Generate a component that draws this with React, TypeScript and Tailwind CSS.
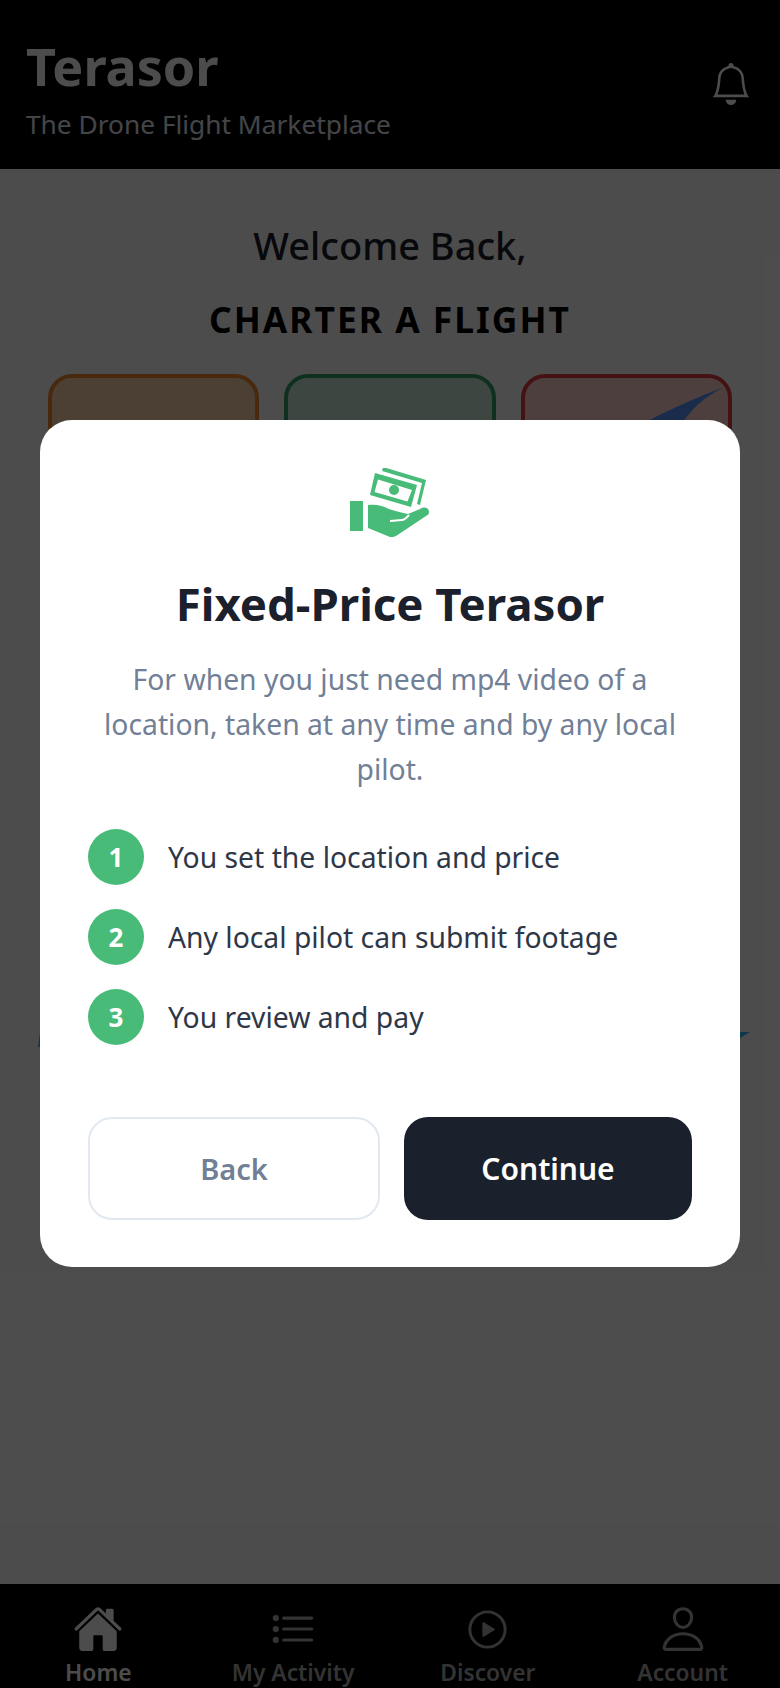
import { BsBell } from "react-icons/bs";
import {
  IoHome,
  IoListOutline,
  IoPersonOutline,
  IoPlayCircleOutline,
} from "react-icons/io5";

const steps = [
  "You set the location and price",
  "Any local pilot can submit footage",
  "You review and pay",
];

const MoneyHand = () => (
  <svg viewBox="30 18 80 70" className="w-[80px] h-[70px]" fill="#48bb78">
    <path d="M30 51h13v30H30z" />
    <path d="M48 55C57 54 63 56 69 59C74 61 80 62 88 64L100 59C105 56 109 58 109 62C109 64 108 65 106 66L76 86C74 87 72 87 70 87L48 78Z" />
    <path d="M70 71L82 70C85 70 87 67 89 65" fill="none" stroke="#fff" strokeWidth="2" />
    <path
      fillRule="evenodd"
      d="M55 23L97 35L91 57L50 45ZM58 29.5L92 40L87.5 51.5L54.5 42Z"
    />
    <path d="M63 17L106 30L100 55L97 54L102 33L62 21Z" />
    <circle cx="74" cy="40" r="5" />
  </svg>
);

const NavItem = ({
  icon,
  label,
  active,
}: {
  icon: React.ReactNode;
  label: string;
  active?: boolean;
}) => (
  <div className={`flex flex-col items-center flex-1 ${active ? "text-white" : "text-[#aaaaaa]"}`}>
    <div className="h-[50px] flex items-center">{icon}</div>
    <span className="mt-[4px] text-[22.8px] leading-[30px] font-semibold whitespace-nowrap">{label}</span>
  </div>
);

export default function App() {
  return (
    <div className="relative h-[1688px] w-[780px] overflow-hidden bg-white flex flex-col font-['Noto_Sans',sans-serif]">
      {/* Header */}
      <header className="h-[169px] shrink-0 bg-black pl-[26px] pr-[28px] pt-[8px] flex items-center justify-between">
        <div>
          <h1 className="text-[52px] leading-[60px] font-bold text-white">Terasor</h1>
          <p className="mt-[10px] text-[26.3px] leading-[36px] text-[#e2e8f0]">The Drone Flight Marketplace</p>
        </div>
        <BsBell className="w-[42px] h-[42px] text-white -mt-[10px]" />
      </header>

      {/* Home page behind the modal */}
      <main className="flex-1 px-[48px] pt-[51px]">
        <h2 className="text-center text-[38px] leading-[50px] font-medium text-[#1a202c]">Welcome Back,</h2>
        <h3 className="mt-[26px] text-center text-[35.4px] leading-[46px] font-bold tracking-[2px] text-black">
          CHARTER A FLIGHT
        </h3>
        <div className="mt-[32px] flex gap-[25px]">
          <div className="h-[300px] flex-1 rounded-[24px] border-4 border-[#f6892c] bg-[#ffd5b0]" />
          <div className="h-[300px] flex-1 rounded-[24px] border-4 border-[#38a169] bg-[#cbecd5]" />
          <div className="relative h-[300px] flex-1 rounded-[24px] border-4 border-[#e53e3e] bg-[#ffd2cf]">
            <svg viewBox="0 0 80 36" className="absolute right-[4px] top-[9px] w-[80px] h-[36px]">
              <path d="M80 0C55 10 30 20 0 36H38C48 22 60 10 80 0Z" fill="#5793ff" />
            </svg>
          </div>
        </div>
        {/* ends of the route line that stick out beside the modal */}
        <div className="mt-[358px] -ml-[10px] -mr-[18px] flex justify-between items-start">
          <svg viewBox="0 0 2 15" className="w-[2px] h-[15px]">
            <path d="M2 0V15H0Z" fill="#2bbcff" />
          </svg>
          <svg viewBox="0 0 10 6" className="w-[10px] h-[6px]">
            <path d="M0 0H10L0 6Z" fill="#2bbcff" />
          </svg>
        </div>
      </main>

      {/* Bottom nav */}
      <nav className="h-[104px] shrink-0 bg-black flex pt-[20px] pl-[1px] pr-[0px] overflow-hidden">
        <NavItem active label="Home" icon={<IoHome className="w-[50px] h-[50px]" />} />
        <NavItem label="My Activity" icon={<IoListOutline className="w-[50px] h-[50px]" />} />
        <NavItem label="Discover" icon={<IoPlayCircleOutline className="w-[47px] h-[47px]" />} />
        <NavItem label="Account" icon={<IoPersonOutline className="w-[50px] h-[50px]" />} />
      </nav>

      {/* Overlay */}
      <div className="absolute inset-0 bg-black/70 flex justify-center pt-[420px]">
        <div className="w-[700px] h-[847px] bg-white rounded-[32px] px-[48px] pt-[48px]">
          <div className="flex justify-center">
            <MoneyHand />
          </div>
          <h2 className="mt-[35px] text-center text-[45.6px] leading-[60px] font-bold text-[#1a202c]">
            Fixed-Price Terasor
          </h2>
          <p className="mt-[24px] text-center text-[28.3px] leading-[45px] text-[#718096]">
            For when you just need mp4 video of a location, taken at any time and by any local pilot.
          </p>
          <ul className="mt-[37px] flex flex-col gap-[24px]">
            {steps.map((step, i) => (
              <li key={step} className="flex items-center gap-[24px]">
                <span className="w-[56px] h-[56px] rounded-full bg-[#48bb78] flex items-center justify-center text-white text-[26px] font-bold">
                  {i + 1}
                </span>
                <span className="text-[28.3px] leading-[40px] text-[#2d3748]">{step}</span>
              </li>
            ))}
          </ul>
          <div className="mt-[72px] flex gap-[24px]">
            <button className="w-[292px] h-[103px] rounded-[24px] border-2 border-[#e2e8f0] text-[29px] font-semibold text-[#718096]">
              Back
            </button>
            <button className="w-[288px] h-[103px] rounded-[24px] bg-[#1a202c] text-[30px] font-semibold text-white">
              Continue
            </button>
          </div>
        </div>
      </div>
    </div>
  );
}
